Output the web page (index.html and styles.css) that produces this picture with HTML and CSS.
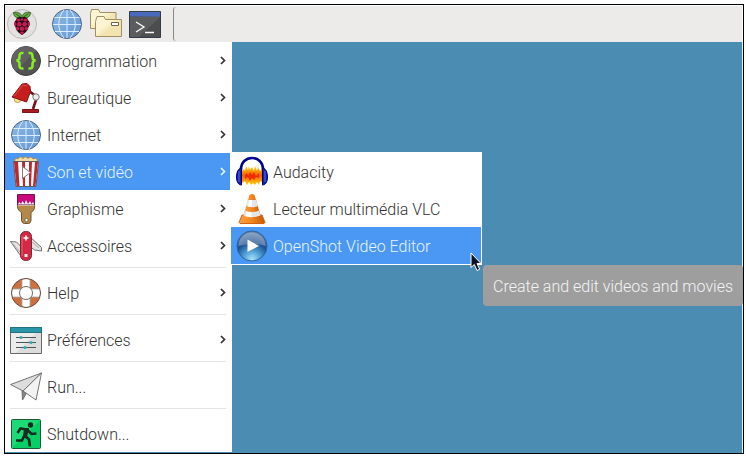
FILE: index.html
```html
<!DOCTYPE html>
<html lang="fr">
<head>
<meta charset="utf-8">
<title>Menu</title>
<link rel="stylesheet" href="styles.css">
</head>
<body>
<svg class="defs" aria-hidden="true">
  <defs>
    <linearGradient id="sky" x1="0" y1="0" x2="1" y2="1"><stop offset="0" stop-color="#8db9e6"/><stop offset="1" stop-color="#6496d2"/></linearGradient>
    <linearGradient id="folder" x1="0" y1="0" x2="1" y2="1"><stop offset=".4" stop-color="#fcf4d2"/><stop offset=".6" stop-color="#f2e3b0"/></linearGradient>
    <linearGradient id="cone" x1="0" y1="0" x2="1" y2="0"><stop offset="0" stop-color="#f9a050"/><stop offset=".45" stop-color="#f58a20"/><stop offset="1" stop-color="#c4590a"/></linearGradient>
    <radialGradient id="orb" cx=".5" cy=".95" r=".9"><stop offset="0" stop-color="#a8e4fb"/><stop offset=".35" stop-color="#4a9ad2"/><stop offset=".65" stop-color="#1d4f90"/><stop offset="1" stop-color="#6484ae"/></radialGradient>
    <linearGradient id="wave" x1="0" y1="0" x2="0" y2="1"><stop offset="0" stop-color="#ffd800"/><stop offset=".5" stop-color="#f86000"/><stop offset="1" stop-color="#ffd000"/></linearGradient>
    <symbol id="globe" viewBox="0 0 32 32">
      <circle cx="16" cy="16" r="14.500" fill="url(#sky)" stroke="#4d6785"/>
      <path d="M16 2v28M3.500 9.500h25M2 16.500h28M4 23.500h24M13 2C6 10 6 22 13 30M19 2c7 8 7 20 0 28" fill="none" stroke="#d9edfc"/>
    </symbol>
    <symbol id="chevron" viewBox="0 0 6 9"><path d="M1 1l3.500 3.500L1 8" fill="none" stroke="currentColor" stroke-width="1.700"/></symbol>
  </defs>
</svg>
<main class="screen">
  <header class="panel">
    <button class="launcher" aria-label="Menu">
      <svg class="icon" viewBox="0 0 32 32">
        <circle cx="17" cy="16" r="14.500" fill="#e2e2e1" stroke="#bbb"/>
        <g transform="translate(1)">
        <path d="M15.500 10C10 11 7.500 8 7.500 4.500c4-1 7.500.5 8.500 4 1-3.500 4.500-5 8.500-4C24.500 8 22 11 16.500 10z" fill="#62ac42" stroke="#2b3f1d" stroke-width=".7"/>
        <path d="M9.500 5.500l5.500 4M22.500 5.500l-5.500 4" stroke="#2b4c1b" stroke-width=".8"/>
        <path d="M16 9.500c3-1 5.500 0 6 2.500 2 2 2.500 4.500.5 7-.5 3-2 5-6.500 8-4.500-3-6-5-6.500-8-2-2.500-1.500-5 .5-7 .5-2.500 3-3.500 6-2.500z" fill="#260711"/>
        <g fill="#c51b51"><ellipse cx="12.500" cy="12" rx="2.200" ry="1.500"/><ellipse cx="19.500" cy="12" rx="2.200" ry="1.500"/><circle cx="16" cy="11.500" r="1.200"/><circle cx="13.300" cy="16.300" r="2.300"/><circle cx="18.700" cy="16.300" r="2.300"/><ellipse cx="9.400" cy="16" rx="1.100" ry="2"/><ellipse cx="22.600" cy="16" rx="1.100" ry="2"/><circle cx="16" cy="20.800" r="2.300"/><ellipse cx="11.500" cy="20.500" rx="1.600" ry="2"/><ellipse cx="20.500" cy="20.500" rx="1.600" ry="2"/><ellipse cx="16" cy="24.700" rx="2" ry="1.200"/></g>
        </g>
      </svg>
    </button>
    <div class="shortcuts">
      <button class="launcher" aria-label="Web"><svg class="icon"><use href="#globe"/></svg></button>
      <button class="launcher" aria-label="Fichiers">
        <svg class="icon" viewBox="0 0 32 32"><g fill="url(#folder)" stroke="#9f8f64"><path d="M.5 20.500v-15l1-4h7l1.500 3h16v16z"/><path d="M5.500 28.500v-15l1.500-5h7l1.500 3h16v17z"/><path d="M21.500 14.500h7v3h-7z" fill="#fff" stroke="#6c654f"/></g></svg>
      </button>
      <button class="launcher" aria-label="Terminal">
        <svg class="icon" viewBox="0 0 32 32"><path d="M.5 3.500h31v26H.5z" fill="#4b4d4f" stroke="#333a48"/><path d="M31 8v1L10 29H1V9z" fill="#5b5c5e"/><path d="M1 4h30v4.500H1z" fill="#4969bd"/><path d="M7 14l8 5-8 5M16 24.500h9" fill="none" stroke="#fff" stroke-width="1.300"/></svg>
      </button>
    </div>
    <div class="handle"></div>
  </header>
  <div class="desktop">
    <nav class="menu">
      <button class="item">
        <svg class="icon" viewBox="0 0 32 32"><circle cx="16" cy="16" r="14.500" fill="#535355" stroke="#3b3b3b"/><path d="M5.700 26.300A14.500 14.500 0 0 1 26.300 5.700z" fill="#626264"/><path d="M13.500 8c-3-.3-4 .5-4 3 0 3 0 4-3 4.500 3 .5 3 2 3 5 0 2.500 1 3.300 4 3M18.500 8c3-.3 4 .5 4 3 0 3 0 4 3 4.500-3 .5-3 2-3 5 0 2.500-1 3.300-4 3" fill="none" stroke="#86ee22" stroke-width="2.600"/></svg>
        <span class="label">Programmation</span><svg class="chevron"><use href="#chevron"/></svg>
      </button>
      <button class="item">
        <svg class="icon" viewBox="0 0 32 32"><circle cx="7.500" cy="17" r="3.500" fill="#ffe48b" stroke="#a77c38" stroke-width=".7"/><path d="M19 9l8 6-4 12" fill="none" stroke="#6e1515" stroke-width="2.600"/><path d="M2 15L12 2l5-.5 3 3 .5 5-4 10.500z" fill="#c41e1f" stroke="#7e1518"/><path d="M4 14L13 3l4 1" fill="none" stroke="#e44b44"/><circle cx="26" cy="15" r="3.200" fill="#ececec" stroke="#777"/><path d="M12.500 27.500h16v3h-16z" fill="#a81c20" stroke="#771519"/></svg>
        <span class="label">Bureautique</span><svg class="chevron"><use href="#chevron"/></svg>
      </button>
      <button class="item">
        <svg class="icon"><use href="#globe"/></svg>
        <span class="label">Internet</span><svg class="chevron"><use href="#chevron"/></svg>
      </button>
      <div class="branch">
        <button class="item selected" aria-expanded="true">
          <svg class="icon" viewBox="0 0 32 32"><path d="M5 6c-1-3 1-4.500 3-3 1-2.500 4-2.500 5-.5 1-2 4-2 5 0 1.500-2 4-1.500 5 .5 3-1.500 5 0 4 3z" fill="#f4dda0" stroke="#aa8850"/><path d="M3.500 5.500h25L26 30.500H6z" fill="#fff" stroke="#695958"/><path d="M4 6h4l1.500 24H6.500zM12 6h3v24h-2zM19 6h3l-1 24h-2zM25 6h3l-2.500 24H23z" fill="#bd2830"/><path d="M12.500 10.500l8 6-8 6z" fill="#fff" stroke="#8c7777"/></svg>
          <span class="label">Son et vidéo</span><svg class="chevron"><use href="#chevron"/></svg>
        </button>
        <div class="submenu">
          <button class="item">
            <svg class="icon" viewBox="0 0 32 32"><path d="M6 15l2-2 1 2 1-5 2 4 1-4 1 4 2-3 2 4 1-5 2 5 1-4 2 4 2-2v13l-2-1-1 4-2-3-2 3-2-2-2 2-2-3-2 3-2-4-2 2-2-3z" fill="url(#wave)"/><path d="M9 19l2-2 1 3 2-4 2 3 2-3 2 4 3-3v5l-3-1-2 3-2-2-2 3-2-4-3 2z" fill="#ee2c00"/><path d="M5 14C4.500-2 27.500-2 27 14" fill="none" stroke="#00008c" stroke-width="2.600"/><path d="M5.500 12v17C2.500 29 .5 26 .5 21s2-9 5-9zM26.500 12v17c3 0 5-3 5-8s-2-9-5-9z" fill="#1120b0" stroke="#000079"/><path d="M3 15v11M29 15v11" stroke="#5b70dc"/></svg>
            <span class="label">Audacity</span>
          </button>
          <button class="item">
            <svg class="icon" viewBox="0 0 32 32"><path d="M6 22h20l3 7.500-1 1H4l-1-1z" fill="url(#cone)" stroke="#d36310"/><path d="M13.500 2q2.500-2 5 0L25 24q-9 5-18 0z" fill="url(#cone)"/><path d="M12 7h8l1.800 6q-5.800 2.500-11.600 0zM9 17.500q7 3 14 0l1.500 5q-8.500 3.500-17 0z" fill="#e5e5e5"/><path d="M13 7h3v6.500h-4zM10.500 18.500l5 .7v5l-6-1z" fill="#fff"/></svg>
            <span class="label">Lecteur multimédia VLC</span>
          </button>
          <div class="branch">
            <button class="item selected" aria-describedby="tip">
              <svg class="icon" viewBox="0 0 32 32"><circle cx="16" cy="16" r="15" fill="url(#orb)" stroke="#2b639c"/><path d="M2.500 16a13.500 13.500 0 0 1 27 0q-13-4-27 0z" fill="#fff" opacity=".27"/><path d="M11.500 9.500L23 16l-11.500 6z" fill="#fff"/></svg>
              <span class="label">OpenShot Video Editor</span>
            </button>
            <svg class="pointer" viewBox="0 0 12 20" aria-hidden="true"><path d="M1 1v14.500l3.300-3 2.700 6 2.700-1.200-2.700-5.800H11z" fill="#111420" stroke="#fff"/></svg>
            <div class="tooltip" id="tip" role="tooltip">Create and edit videos and movies</div>
          </div>
        </div>
      </div>
      <button class="item">
        <svg class="icon" viewBox="0 0 32 32"><path d="M7.500 10.500h17c.5 5-.5 7-3.500 9v8q-.5 3-2.500 3h-4q-2.500 0-3-3v-8c-3-2-4.500-4-4-9z" fill="#b38848" stroke="#6e5531"/><path d="M7.500 1.500h17v10h-17z" fill="#c9087b" stroke="#76124c"/><path d="M8 11l1.500-2L11 11l1.500-3 2 3L16 7l2 4 2-3 1.500 3L23 9l1 2z" fill="#fff"/><path d="M8 12h16" stroke="#f3dff0"/><circle cx="16.500" cy="27" r="1.700" fill="#fff" stroke="#66502c" stroke-width=".7"/></svg>
        <span class="label">Graphisme</span><svg class="chevron"><use href="#chevron"/></svg>
      </button>
      <button class="item">
        <svg class="icon" viewBox="0 0 32 32"><path d="M.5 11.500l6 .5 8 8-3 7zM19 6l12.500 11.500v3.500l-7-1L17 14z" fill="#e4e4e4" stroke="#747474"/><path d="M3 14l8 9M22 12l7 6" stroke="#aaa"/><rect x="10.500" y="1.500" width="11" height="29" rx="5" fill="#d42945" stroke="#7d2632"/><path d="M12 6v20" stroke="#ef6075"/><path d="M16 5.500v5M13.500 8h5" stroke="#fff" stroke-width="1.600"/><path d="M14.500 24h3v3h-3z" fill="#eee"/></svg>
        <span class="label">Accessoires</span><svg class="chevron"><use href="#chevron"/></svg>
      </button>
      <hr>
      <button class="item">
        <svg class="icon" viewBox="0 0 32 32"><circle cx="16" cy="16" r="10.500" fill="none" stroke="#cc7040" stroke-width="8"/><path d="M12 2h8v9h-8zM12 21h8v9h-8zM2 12h9v8H2zM21 12h9v8h-9z" fill="#fff"/><path d="M12 2v9M20 2v9M12 21v9M20 21v9M2 12h9M2 20h9M21 12h9M21 20h9" stroke="#a0aaa8" stroke-width=".8"/><circle cx="16" cy="16" r="14.500" fill="none" stroke="#684b40"/><circle cx="16" cy="16" r="6.500" fill="#fff" stroke="#6b6b6b"/></svg>
        <span class="label">Help</span><svg class="chevron"><use href="#chevron"/></svg>
      </button>
      <hr>
      <button class="item">
        <svg class="icon" viewBox="0 0 32 32"><path d="M.5 3.500h31v26H.5z" fill="#dcdcdc" stroke="#686868"/><path d="M1 8h26L6 29H1z" fill="#ececec"/><path d="M.5 3.500h31v5H.5z" fill="#2995a8" stroke="#25717e"/><path d="M6 13.500h20M6 18.500h20M6 23.500h20" stroke="#4c5555"/><g fill="#31a8b4"><circle cx="11" cy="13.500" r="1.600"/><circle cx="21" cy="18.500" r="1.600"/><circle cx="15" cy="23.500" r="1.600"/></g></svg>
        <span class="label">Préférences</span><svg class="chevron"><use href="#chevron"/></svg>
      </button>
      <hr>
      <button class="item">
        <svg class="icon" viewBox="0 0 32 32"><g stroke="#666" stroke-width=".9" stroke-linejoin="round"><path d="M12 19l.5 10 4-7z" fill="#888"/><path d="M.5 13.500L31.500 2 13 20z" fill="#dcdcdc"/><path d="M31.500 2L26 29 13 20z" fill="#f3f3f3"/></g></svg>
        <span class="label">Run...</span>
      </button>
      <hr>
      <button class="item">
        <svg class="icon" viewBox="0 0 32 32"><rect x="1.500" y="1.500" width="29" height="29" rx="1" fill="#06cf66" stroke="#20593a"/><path d="M2 2h28L2 30z" fill="#1cdb76"/><circle cx="20.500" cy="7" r="2.700" fill="#142c20"/><path d="M17.500 10.500l-3.500 8M16.500 11.500l-6-1-3 4.500M17.500 12l4 4 5-.5M14.500 17.500l4.500 4 1 7M14 18l-2 4.500H6" fill="none" stroke="#142c20" stroke-width="2.600"/><path d="M14 10h5l-2 9h-4z" fill="#142c20"/></svg>
        <span class="label">Shutdown...</span>
      </button>
    </nav>
  </div>
</main>
</body>
</html>
```
FILE: styles.css
```css
* {
  box-sizing: border-box;
}

body {
  margin: 0;
  padding: 4px 2px 2px 4px;
  min-height: 100vh;
  display: flex;
  background: #fff;
  color: #333;
  font: 300 16px/20px Roboto, sans-serif;
}

.defs {
  position: absolute;
  width: 0;
  height: 0;
}

.screen {
  flex: 1;
  display: flex;
  flex-direction: column;
  border: 1px solid #000;
  overflow: hidden;
}

.panel {
  display: flex;
  align-items: stretch;
  height: 37px;
  border-right: 1px solid #fff;
  border-top: 1px solid #fff;
  background: #edebea;
}

button {
  border: 0;
  padding: 0;
  background: none;
  color: inherit;
  font: inherit;
  text-align: left;
}

.launcher {
  display: flex;
  align-items: center;
}

.icon {
  display: block;
  flex: none;
  width: 32px;
  height: 32px;
}

.shortcuts {
  display: flex;
  gap: 7px;
  padding: 0 12px 0 14px;
}

.handle {
  width: 4px;
  margin: 1px 0;
  border-left: 1px solid #888;
  border-radius: 3px 0 0 3px;
}

.desktop {
  flex: 1;
  border-right: 1px solid #e4eef3;
  background: #4a8cb2;
}

.menu {
  width: 227px;
  padding-right: 1px;
  background: #fff;
}

.item {
  display: flex;
  align-items: center;
  gap: 5px;
  width: 100%;
  height: 37px;
  padding: 0 5px;
}

.label {
  flex: 1;
  padding-top: 3px;
  white-space: nowrap;
}

.chevron {
  width: 6px;
  height: 9px;
}

.selected {
  background: #4b97f4;
  color: #e3f5ff;
}

.branch {
  position: relative;
}

hr {
  margin: 3px 5px 6px;
  border: 0;
  border-top: 1px solid #e4e4e4;
}

.submenu {
  position: absolute;
  top: -1px;
  left: calc(100% - 1px);
  z-index: 1;
  width: 252px;
  border: 1px solid #fff;
  background: #fff;
}

.pointer {
  position: absolute;
  right: -1px;
  bottom: -8px;
  z-index: 2;
  width: 12px;
  height: 20px;
}

.tooltip {
  position: absolute;
  top: 38px;
  left: calc(100% + 2px);
  padding: 12px 10px 9px;
  border-radius: 4px;
  background: #9e9e9e;
  color: #f4f4f4;
  white-space: nowrap;
}
```
